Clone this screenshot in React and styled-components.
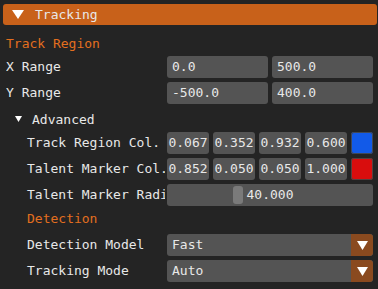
import React from 'react';
import styled, { createGlobalStyle } from 'styled-components';

const GlobalStyle = createGlobalStyle`
    html, body {
        margin: 0;
        padding: 0;
        background: #242424;
    }
    * {
        box-sizing: border-box;
    }
`;

const Window = styled.div`
    width: 378px;
    height: 289px;
    overflow: hidden;
    background: #242424;
    padding: 4px 1px 0 3px;
    font-family: "DejaVu Sans Mono", "Liberation Mono", monospace;
    font-size: 13px;
    color: #e8e8e8;
`;

const Header = styled.div`
    display: flex;
    align-items: center;
    gap: 11px;
    height: 21px;
    padding-left: 9px;
    background: #c8611a;
    border-radius: 3px;
    svg {
        display: block;
    }
`;

const Body = styled.div`
    display: flex;
    flex-direction: column;
    padding: 0 4px 0 3px;
`;

const Row = styled.div`
    display: grid;
    grid-template-columns: 161px 206px;
    align-items: center;
    height: 22px;
    margin-top: ${p => p.$top}px;
`;

const Label = styled.div`
    padding-left: ${p => p.$indent || 0}px;
    white-space: nowrap;
    overflow: hidden;
    line-height: 22px;
    width: 159px;
`;

const Title = styled.div`
    height: 22px;
    line-height: 22px;
    margin-top: ${p => p.$top}px;
    padding-left: ${p => p.$indent || 0}px;
    color: #e36f1f;
`;

const TreeNode = styled.div`
    display: flex;
    align-items: center;
    gap: 10px;
    height: 22px;
    margin-top: ${p => p.$top}px;
    padding-left: 9px;
`;

const Fields = styled.div`
    display: flex;
    gap: 4px;
    height: 22px;
`;

const Field = styled.div`
    flex: ${p => p.$fixed ? `0 0 ${p.$fixed}px` : 1};
    height: 22px;
    line-height: 22px;
    background: #545454;
    border-radius: 3px;
    padding: 0 ${p => p.$center ? 0 : 5}px;
    text-align: ${p => p.$center ? 'center' : 'left'};
    white-space: nowrap;
    overflow: hidden;
`;

const Swatch = styled.div`
    flex: 0 0 22px;
    height: 22px;
    border-radius: 3px;
    background: ${p => p.$color};
    box-shadow: inset 0 0 0 1px rgba(70, 70, 70, 0.9);
`;

const Slider = styled.div`
    position: relative;
    height: 22px;
    line-height: 22px;
    background: #545454;
    border-radius: 3px;
    text-align: center;
`;

const Grab = styled.div`
    position: absolute;
    top: 2px;
    bottom: 2px;
    width: 10px;
    border-radius: 3px;
    background: #7a7a7a;
`;

const SliderText = styled.span`
    position: relative;
`;

const Combo = styled.div`
    display: flex;
    height: 22px;
    background: #545454;
    border-radius: 3px;
    overflow: hidden;
`;

const ComboValue = styled.div`
    flex: 1;
    line-height: 22px;
    padding-left: 5px;
`;

const ComboArrow = styled.div`
    flex: 0 0 22px;
    display: flex;
    align-items: center;
    justify-content: center;
    background: #8a4a1f;
    border-radius: 0 3px 3px 0;
    svg {
        display: block;
    }
`;

const Arrow = ({ w, h }) => (
    <svg width={w} height={h} viewBox={`0 0 ${w} ${h}`}>
        <polygon points={`0,0 ${w},0 ${w / 2},${h}`} fill="#ffffff" />
    </svg>
);

const colors = [
    { label: 'Track Region Col.', values: ['0.067', '0.352', '0.932', '0.600'], swatch: '#125ae8' },
    { label: 'Talent Marker Col.', values: ['0.852', '0.050', '0.050', '1.000'], swatch: '#d90d0d' },
];

const SliderRow = ({ value, min, max }) => {
    const frac = (value - min) / (max - min);
    const left = 2 + frac * (206 - 4 - 10);
    return (
        <Slider>
            <Grab style={{ left: `${left}px` }} />
            <SliderText>{value.toFixed(3)}</SliderText>
        </Slider>
    );
};

const ComboBox = ({ value }) => (
    <Combo>
        <ComboValue>{value}</ComboValue>
        <ComboArrow>
            <Arrow w={11} h={9} />
        </ComboArrow>
    </Combo>
);

const App = () => {
    return (
        <>
            <GlobalStyle />
            <Window>
                <Header>
                    <Arrow w={12} h={9} />
                    <span>Tracking</span>
                </Header>
                <Body>
                    <Title $top={8}>Track Region</Title>
                    <Row $top={1}>
                        <Label>X Range</Label>
                        <Fields>
                            <Field>0.0</Field>
                            <Field>500.0</Field>
                        </Fields>
                    </Row>
                    <Row $top={4}>
                        <Label>Y Range</Label>
                        <Fields>
                            <Field>-500.0</Field>
                            <Field>400.0</Field>
                        </Fields>
                    </Row>
                    <TreeNode $top={4}>
                        <Arrow w={7} h={6} />
                        <span>Advanced</span>
                    </TreeNode>
                    {colors.map((c, i) => (
                        <Row key={c.label} $top={i === 0 ? 2 : 4}>
                            <Label $indent={21}>{c.label}</Label>
                            <Fields>
                                {c.values.map((v, j) => (
                                    <Field key={j} $center $fixed={42}>{v}</Field>
                                ))}
                                <Swatch $color={c.swatch} />
                            </Fields>
                        </Row>
                    ))}
                    <Row $top={4}>
                        <Label $indent={21}>Talent Marker Radius</Label>
                        <SliderRow value={40} min={0} max={120} />
                    </Row>
                    <Title $top={2} $indent={21}>Detection</Title>
                    <Row $top={4}>
                        <Label $indent={21}>Detection Model</Label>
                        <ComboBox value="Fast" />
                    </Row>
                    <Row $top={4}>
                        <Label $indent={21}>Tracking Mode</Label>
                        <ComboBox value="Auto" />
                    </Row>
                </Body>
            </Window>
        </>
    );
};

export default App;
